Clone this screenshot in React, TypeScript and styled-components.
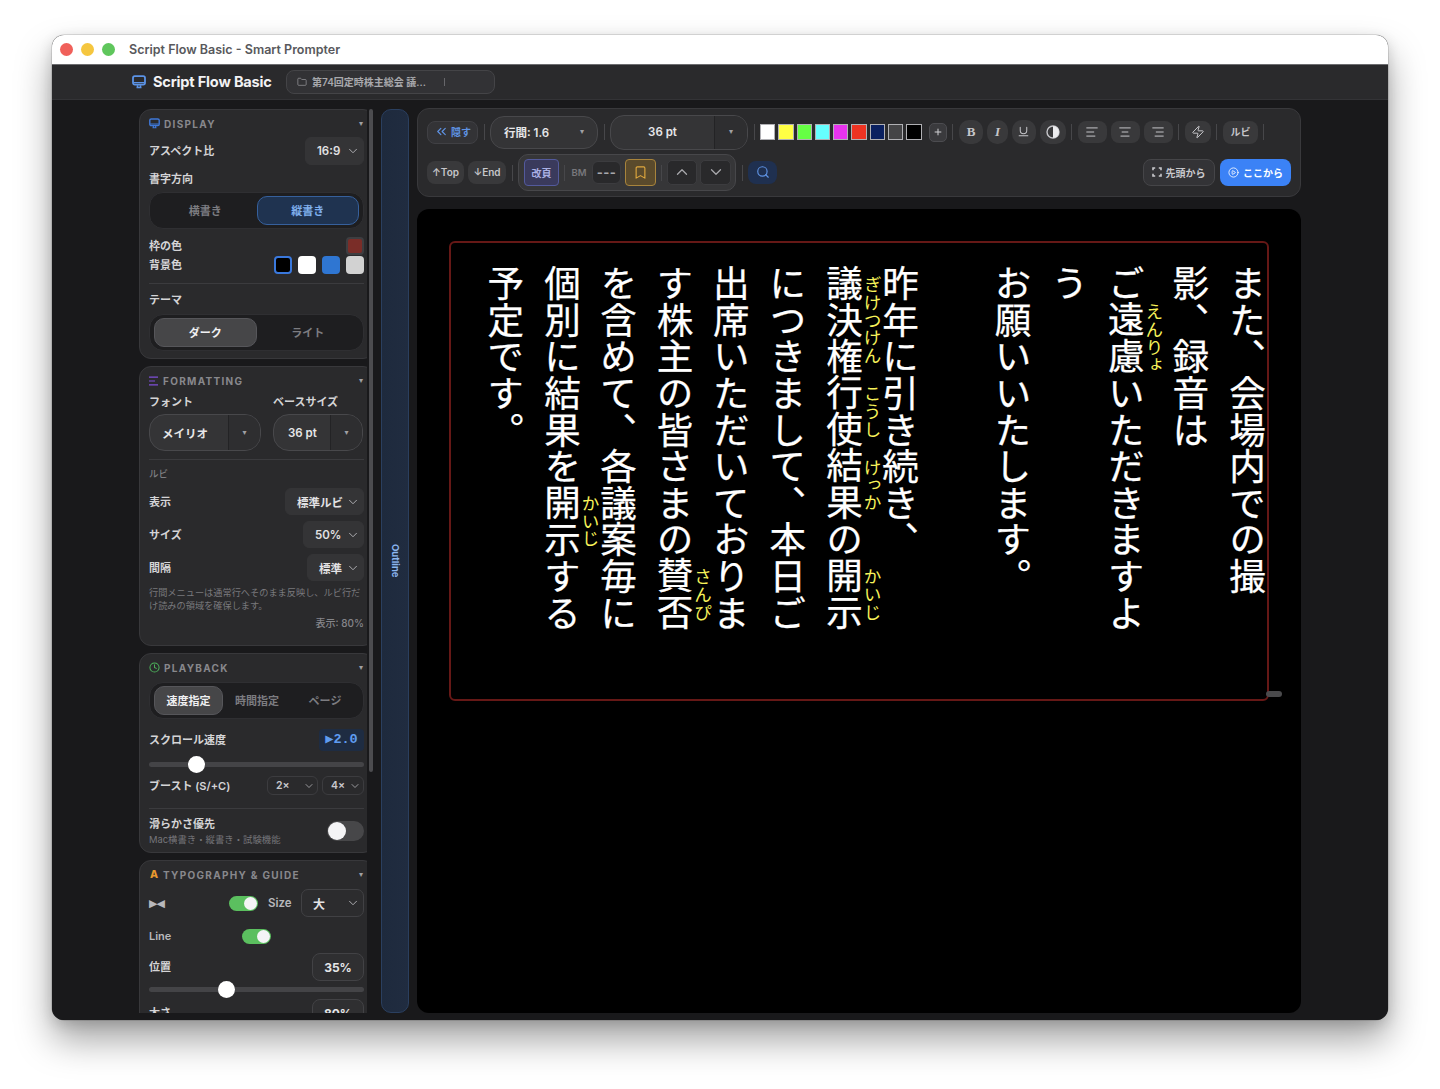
import React from "react";
import styled, { createGlobalStyle } from "styled-components";
import {
  AlignCenter, AlignLeft, AlignRight, Bookmark, ChevronDown, ChevronUp, ChevronsLeft, CirclePlay,
  Clock, Folder, Plus, Search, Underline, Zap,
} from "lucide-react";

const UI = `Inter, "Noto Sans CJK JP", sans-serif`;

const Global = createGlobalStyle`
  html, body { margin: 0; padding: 0; background: #fff; }
  body { width: 1440px; height: 1089px; overflow: hidden; font-family: ${UI}; }
  * { box-sizing: border-box; }
`;

const Page = styled.div`
  width: 1440px; height: 1089px; padding: 35px 52px 0;
`;
const Win = styled.div`
  height: 985px; border-radius: 12px; overflow: hidden; display: flex; flex-direction: column;
  box-shadow: 0 0 0 0.5px rgba(0,0,0,.22), 0 20px 36px rgba(0,0,0,.36), 0 4px 14px rgba(0,0,0,.14);
  background: #1a1a1c;
`;
const TitleBar = styled.div`
  height: 30px; flex: none; background: #fff; display: flex; align-items: center; padding-left: 8px;
  border-bottom: 1px solid #6d6d70;
`;
const Light = styled.span<{ $c: string }>`
  width: 13px; height: 13px; border-radius: 50%; background: ${p => p.$c}; margin-right: 8px; flex: none;
`;
const WinTitle = styled.div`
  margin-left: 6px; font-size: 12.5px; font-weight: 600; color: #58585c; white-space: nowrap;
`;
const AppHeader = styled.div`
  height: 35px; flex: none; background: #2a2a2c; border-bottom: 1px solid #333336;
  display: flex; align-items: center; padding: 0 0 1px 80px; color: #5b93e6;
`;
const Brand = styled.div`
  margin-left: 7px; font-size: 14.6px; font-weight: 700; letter-spacing: -0.2px; color: #f2f2f4; width: 134px; white-space: nowrap;
`;
const FileChip = styled.div`
  width: 209px; height: 24px; margin-left: -1px; border: 1px solid #444447; border-radius: 8px; background: #323235;
  display: flex; align-items: center; padding-left: 10px; gap: 5px; color: #a0a0a4;
`;
const FileName = styled.span`
  font-size: 10px; font-weight: 600; color: #a8a8ac; width: 127px; white-space: nowrap; overflow: hidden;
`;
const FileBar = styled.span`
  width: 1px; height: 8px; background: #66666a;
`;
const Body = styled.div`
  flex: 1; min-height: 0; display: flex; gap: 8px; padding: 8px 87px 7px; background: #19191b;
`;
const Sidebar = styled.div`
  width: 234px; flex: none; margin-top: 1px; display: flex; gap: 2px; min-height: 0;
`;
const CardsClip = styled.div`
  width: 228px; overflow: hidden; display: flex; flex-direction: column; gap: 7px; flex: none;
`;
const ScrollThumb = styled.div`
  width: 4px; height: 663px; border-radius: 3px; background: #4c4c4f; flex: none;
`;
const Card = styled.section<{ $pb: number }>`
  width: 236px; flex: none; background: #2a2a2c; border: 1px solid #38383b; border-radius: 12px;
  padding: 0 10px ${p => p.$pb}px 9px; display: flex; flex-direction: column; color: #dcdcde;
`;
const CardHead = styled.header<{ $c: string }>`
  height: 27px; flex: none; display: flex; align-items: center; gap: 4px; color: ${p => p.$c};
`;
const CardName = styled.span`
  font-size: 10px; font-weight: 700; letter-spacing: 1.3px; color: #88888c; white-space: nowrap; flex: 1;
`;
const TinyCaret = styled.span<{ $c?: string }>`
  font-family: "DejaVu Sans", sans-serif; font-size: 8px; line-height: 1; color: ${p => p.$c || "#a0a0a4"};
`;
const HeadCaret = styled(TinyCaret)`
  margin-right: 1px;
`;
const Row = styled.div<{ $mt?: number; $h?: number }>`
  margin-top: ${p => p.$mt || 0}px; ${p => p.$h ? `height: ${p.$h}px;` : ""}
  display: flex; align-items: center; justify-content: space-between; flex: none;
`;
const Label = styled.div<{ $mt?: number; $w?: number }>`
  margin-top: ${p => p.$mt || 0}px; font-size: 11px; font-weight: 600; color: #d4d4d6; line-height: 18px; white-space: nowrap;
  ${p => p.$w ? `width: ${p.$w}px; flex: none;` : ""}
`;
const Select = styled.div<{ $w: number; $h: number; $b?: boolean; $r?: number; $fs?: number }>`
  width: ${p => p.$w}px; height: ${p => p.$h}px; flex: none; border-radius: ${p => p.$r || 6}px;
  background: ${p => p.$b ? "#2c2c2e" : "#343436"}; border: 1px solid ${p => p.$b ? "#414144" : "#343436"};
  display: flex; align-items: center; justify-content: space-between; padding: 0 3px 0 11px;
  font-size: ${p => p.$fs || 11.5}px; font-weight: 600; color: #e2e2e4; white-space: nowrap;
  svg { color: #b4b4b8; flex: none; }
`;
const Seg = styled.div<{ $mt: number }>`
  margin-top: ${p => p.$mt}px; height: 37px; flex: none; border-radius: 14px; background: #1e1e20; border: 1px solid #2f2f32;
  padding: 3px 4px; display: flex; align-items: stretch; gap: 0;
`;
const SegBtn = styled.div<{ $tone?: "blue" | "gray"; $w?: number }>`
  ${p => p.$w ? `width: ${p.$w}px; flex: none;` : "flex: 1;"} border-radius: 10px; display: flex; align-items: center; justify-content: center;
  font-size: 11px; font-weight: 600; white-space: nowrap; padding-bottom: 2px;
  color: ${p => p.$tone === "blue" ? "#7fb0ee" : p.$tone === "gray" ? "#f0f0f2" : "#7c7c80"};
  background: ${p => p.$tone === "blue" ? "#1f3350" : p.$tone === "gray" ? "#464648" : "transparent"};
  border: 1px solid ${p => p.$tone === "blue" ? "#36609c" : p.$tone === "gray" ? "#56565a" : "transparent"};
`;
const ColorChips = styled.div`
  display: flex; gap: 6px;
`;
const ColorChip = styled.span<{ $c: string; $ring?: string }>`
  width: 18px; height: 18px; border-radius: 4px; background: ${p => p.$c};
  border: ${p => p.$ring ? `2px solid ${p.$ring}` : "none"};
`;
const FrameChip = styled.span`
  width: 18px; height: 18px; border-radius: 4px; background: #7a2d28; border: 2px solid #3e3e41;
`;
const Divider = styled.div<{ $mt: number }>`
  height: 1px; flex: none; margin-top: ${p => p.$mt}px; background: #3b3b3e;
`;
const DuoGrid = styled.div<{ $mt?: number }>`
  margin-top: ${p => p.$mt || 0}px; display: grid; grid-template-columns: 112px 90px; column-gap: 12px; flex: none;
`;
const Combo = styled.div<{ $h: number; $w?: number; $r?: number }>`
  height: ${p => p.$h}px; ${p => p.$w ? `width: ${p.$w}px; flex: none;` : ""} border-radius: ${p => p.$r || 15}px; border: 1px solid #48484b; background: #343436;
  display: flex; align-items: stretch; overflow: hidden;
`;
const ComboMain = styled.div<{ $pl?: number; $center?: boolean }>`
  flex: 1; display: flex; align-items: center; ${p => p.$center ? "justify-content: center;" : ""} padding-left: ${p => p.$pl || 0}px;
  font-size: 11.5px; font-weight: 600; color: #e6e6e8; white-space: nowrap;
`;
const ComboCaret = styled.div<{ $w: number; $line?: boolean }>`
  width: ${p => p.$w}px; flex: none; display: flex; align-items: center; justify-content: center;
  ${p => p.$line ? "border-left: 1px solid #232325; background: #2e2e30;" : ""}
`;
const MiniHead = styled.div<{ $mt: number }>`
  margin-top: ${p => p.$mt}px; font-size: 9.5px; font-weight: 500; color: #7e7e82; line-height: 14px;
`;
const Note = styled.p`
  margin: 5px 0 0; font-size: 9.2px; line-height: 13px; color: #79797d; font-weight: 400; word-break: break-all;
  width: 215px;
`;
const Percent = styled.div`
  margin-top: 4px; font-size: 10px; line-height: 14px; color: #85858a; text-align: right; font-weight: 500;
`;
const SpeedBox = styled.div`
  width: 45px; height: 22px; border-radius: 4px; background: #1e2c42; color: #5f9cf0;
  font: 700 13.5px/22px "Liberation Mono", monospace; text-align: center; white-space: nowrap;
`;
const Slider = styled.div<{ $mt: number; $pos: number }>`
  margin-top: ${p => p.$mt}px; height: 18px; flex: none; position: relative; display: flex; align-items: center;
  &::before { content: ""; flex: 1; height: 5px; border-radius: 3px; background: #444447; }
  &::after { content: ""; position: absolute; left: ${p => p.$pos}px; top: 0.5px; width: 17px; height: 17px; border-radius: 50%; background: #fff; }
`;
const Pair = styled.div<{ $gap: number }>`
  display: flex; align-items: center; gap: ${p => p.$gap}px;
`;
const BoostSelect = styled(Select)`
  padding: 0 2px 0 8px; font-size: 10.5px; color: #c8c8cc; background: #2a2a2c; border-color: #3c3c3f;
`;
const Stack = styled.div`
  display: flex; flex-direction: column;
`;
const SmoothTitle = styled.div`
  font-size: 11px; font-weight: 600; line-height: 16px; color: #d4d4d6; margin-top: 1px;
`;
const SmoothSub = styled.div`
  font-size: 9.4px; line-height: 14px; color: #75757a; margin-top: 1px; white-space: nowrap;
`;
const Toggle = styled.div<{ $on?: boolean; $w: number; $h: number; $ml?: number }>`
  position: relative; flex: none; width: ${p => p.$w}px; height: ${p => p.$h}px; border-radius: ${p => p.$h / 2}px;
  margin-left: ${p => p.$ml || 0}px; background: ${p => p.$on ? "#5bbf5f" : "#474749"};
  &::after {
    content: ""; position: absolute; top: 1px; width: ${p => p.$h - 2}px; height: ${p => p.$h - 2}px; border-radius: 50%; background: #f4f4f6;
    ${p => p.$on ? "right: 1px;" : "left: 1px;"}
  }
`;
const PlainRow = styled.div<{ $mt: number; $h: number }>`
  margin-top: ${p => p.$mt}px; height: ${p => p.$h}px; flex: none; display: flex; align-items: center;
`;
const GlyphLabel = styled.span`
  width: 80px; flex: none; font-family: "DejaVu Sans", sans-serif; font-size: 11px; color: #b8b8bc; letter-spacing: -1px;
`;
const SizeLabel = styled.span`
  margin-left: 10px; font-size: 11.5px; font-weight: 600; color: #b8b8bc; flex: 1;
`;
const LineLabel = styled.span`
  width: 93px; flex: none; font-size: 11px; font-weight: 600; color: #b8b8bc;
`;
const ValueBox = styled.div`
  width: 52px; height: 28px; flex: none; border: 1px solid #424245; border-radius: 8px; background: #2f2f31;
  display: flex; align-items: center; justify-content: center; font-size: 12px; font-weight: 700; color: #e6e6e8;
`;
const Rail = styled.aside`
  width: 28px; flex: none; margin-top: 1px; border-radius: 10px; border: 1px solid #2a3f5f;
  background: linear-gradient(90deg, #1e2a3d, #202c40); display: flex; align-items: center; justify-content: center;
`;
const RailText = styled.span`
  writing-mode: vertical-rl; font-size: 9.5px; font-weight: 700; color: #8cb6f0;
`;
const Main = styled.main`
  flex: 1; min-width: 0; display: flex; flex-direction: column; gap: 12px;
`;
const Toolbar = styled.div`
  height: 89px; flex: none; border-radius: 12px; border: 1px solid #39393c; background: #2a2a2c;
  padding: 5px 9px; display: flex; flex-direction: column; gap: 4px;
`;
const ToolRow = styled.div<{ $h: number }>`
  height: ${p => p.$h}px; flex: none; display: flex; align-items: center; gap: 5.5px;
`;
const Sep = styled.span<{ $m?: number }>`
  width: 1px; height: 16px; flex: none; background: #47474a; margin: 0 ${p => p.$m || 0}px;
`;
const Btn = styled.div<{ $w: number; $h: number; $r?: number; $tone?: "plain" | "ghost" | "blue" | "dark" }>`
  width: ${p => p.$w}px; height: ${p => p.$h}px; flex: none; border-radius: ${p => p.$r || 8}px;
  display: flex; align-items: center; justify-content: center; gap: 2px; white-space: nowrap;
  font-size: 10px; font-weight: 600; padding-bottom: 1px;
  ${p => p.$tone === "ghost" ? "background:#333336;border:1px solid #404044;color:#5f93e4;"
    : p.$tone === "blue" ? "background:#1f3050;color:#5f93e4;"
    : p.$tone === "dark" ? "background:#29292b;border:1px solid #3c3c3f;color:#a8a8ac;"
    : "background:#39393b;color:#c6c6ca;"}
`;
const Swatches = styled.div`
  display: flex; gap: 3px; margin-right: 1.8px;
`;
const Swatch = styled.span<{ $c: string }>`
  width: 15.3px; height: 15.3px; flex: none; background: ${p => p.$c}; border: 1px solid #b0b0b4;
`;
const PlusBtn = styled(Btn)`
  background: #3a3a3d; border: 1px solid #4c4c50; color: #d0d0d4;
`;
const BtnGroup = styled.div<{ $gap: number }>`
  display: flex; gap: ${p => p.$gap}px; align-items: center;
`;
const SerifB = styled.span<{ $i?: boolean }>`
  font-family: "Liberation Serif", serif; font-size: 13px; font-weight: 700; font-style: ${p => p.$i ? "italic" : "normal"};
`;
const PageGroup = styled.div`
  width: 218px; height: 37px; flex: none; border: 1px solid #47474a; border-radius: 10px; background: #363638;
  padding: 0 4px 0 5px; display: flex; align-items: center; gap: 4px;
`;
const PageBreak = styled.div`
  width: 35px; height: 27px; flex: none; border-radius: 4px; background: #3a3a5c; border: 1px solid #535a9c; color: #aab0e4;
  font-size: 10px; font-weight: 600; display: flex; align-items: center; justify-content: center; padding-bottom: 1px;
`;
const BmLabel = styled.span`
  width: 18px; flex: none; font-size: 9.5px; font-weight: 600; color: #78787c; text-align: center; margin-left: 0;
`;
const BmDash = styled.span`
  font-size: 13px; font-weight: 700; letter-spacing: 0.4px; color: #a8a8ac;
`;
const BmOn = styled.div`
  width: 31px; height: 27px; flex: none; border-radius: 4px; background: #5a4a2c; border: 1px solid #a8843c; color: #e0a83e;
  display: flex; align-items: center; justify-content: center;
`;
const Spacer = styled.div`
  flex: 1;
`;
const OutlineCta = styled.div`
  width: 72px; height: 27px; flex: none; border-radius: 8px; background: #333336; border: 1px solid #454548; color: #c8c8cc;
  font-size: 10px; font-weight: 600; display: flex; align-items: center; justify-content: center; gap: 4px; white-space: nowrap; padding-bottom: 1px;
`;
const PrimaryCta = styled(OutlineCta)`
  width: 71px; background: #3b82f6; border: none; color: #fff;
`;
const Stage = styled.div`
  flex: 1; min-height: 0; background: #000; border-radius: 12px; padding: 32px 32px 0;
`;
const Frame = styled.div`
  position: relative; height: 460px; border: 2px solid #661816; border-radius: 6px; padding: 21.5px 2px 0 0;
  display: flex; justify-content: flex-end;
`;
const Handle = styled.span`
  position: absolute; right: -15px; bottom: 2.5px; width: 16px; height: 6px; border-radius: 3px; background: #4a4a4c;
`;
const Columns = styled.div`
  writing-mode: vertical-rl; font-family: "Noto Sans CJK JP", sans-serif; color: #fff; font-size: 36.6px; font-weight: 400;
  height: 420px;
`;
const Line = styled.div<{ $ruby?: boolean; $mr?: number }>`
  display: block; line-height: 36.6px; white-space: nowrap;
  padding-right: ${p => p.$ruby ? 2.4 : 20}px;
  margin-right: ${p => p.$mr || 0}px;
  -webkit-text-stroke: 0.25px #fff;
  &:first-child { padding-right: 0; }
`;
const BlankLine = styled.div`
  width: 56px;
`;
const Ruby = styled.ruby`
  ruby-align: center;
`;
const Rt = styled.rt`
  font-size: 17.6px; font-weight: 400; line-height: 17.6px; color: #f7f25a; letter-spacing: 0; -webkit-text-stroke: 0;
`;

const DisplayIcon = ({ size = 13 }: { size?: number }) => (
  <svg width={size} height={size} viewBox="0 0 14 14" fill="none" stroke="currentColor">
    <rect x="1" y="1.2" width="12" height="8.4" rx="1.8" strokeWidth="1.8" />
    <path d="M1.5 7.6h11" strokeWidth="1.2" />
    <path d="M4.5 12.4h5M5.5 10.2v2M8.5 10.2v2" strokeWidth="1.5" />
  </svg>
);

const FormatIcon = () => (
  <svg width="10" height="10" viewBox="0 0 10 10" fill="none" stroke="currentColor" strokeWidth="1.2">
    <path d="M0 1.2h9M0 5h6M0 8.8h9" />
  </svg>
);

const HalfCircle = () => (
  <svg width="14" height="14" viewBox="0 0 14 14">
    <circle cx="7" cy="7" r="6" fill="none" stroke="currentColor" strokeWidth="1.4" />
    <path d="M7 1a6 6 0 0 1 0 12z" fill="#ececee" />
  </svg>
);

const CornerIcon = () => (
  <svg width="10" height="10" viewBox="0 0 10 10" fill="none" stroke="currentColor" strokeWidth="1.6">
    <path d="M1 3.2V1h2.2M6.8 1H9v2.2M9 6.8V9H6.8M3.2 9H1V6.8" />
  </svg>
);

const AccentA = styled.span`
  width: 10px; font-size: 10.5px; font-weight: 800; color: #e8992f; text-align: center;
`;

const Chev = () => <ChevronDown size={14} strokeWidth={1.6} />;

export default function App() {
  return (
    <Page>
      <Global />
      <Win>
        <TitleBar>
          <Light $c="#f0605a" />
          <Light $c="#f5c63f" />
          <Light $c="#5fc65c" />
          <WinTitle>Script Flow Basic - Smart Prompter</WinTitle>
        </TitleBar>
        <AppHeader>
          <DisplayIcon size={14} />
          <Brand>Script Flow Basic</Brand>
          <FileChip>
            <Folder size={10} strokeWidth={1.6} />
            <FileName>第74回定時株主総会 議...</FileName>
            <FileBar />
          </FileChip>
        </AppHeader>
        <Body>
          <Sidebar>
            <CardsClip>
              <Card $pb={7}>
                <CardHead $c="#3f78d8">
                  <DisplayIcon size={11} />
                  <CardName>DISPLAY</CardName>
                  <HeadCaret>▾</HeadCaret>
                </CardHead>
                <Row $h={28}>
                  <Label>アスペクト比</Label>
                  <Select $w={59} $h={28}>16:9<Chev /></Select>
                </Row>
                <Label $mt={5}>書字方向</Label>
                <Seg $mt={4}>
                  <SegBtn>横書き</SegBtn>
                  <SegBtn $tone="blue">縦書き</SegBtn>
                </Seg>
                <Row $mt={8} $h={18}>
                  <Label>枠の色</Label>
                  <FrameChip />
                </Row>
                <Row $mt={1} $h={18}>
                  <Label>背景色</Label>
                  <ColorChips>
                    <ColorChip $c="#000" $ring="#3a78dc" />
                    <ColorChip $c="#fff" />
                    <ColorChip $c="#2f76d2" />
                    <ColorChip $c="#d2d2d2" />
                  </ColorChips>
                </Row>
                <Divider $mt={9} />
                <Label $mt={7}>テーマ</Label>
                <Seg $mt={5}>
                  <SegBtn $tone="gray">ダーク</SegBtn>
                  <SegBtn>ライト</SegBtn>
                </Seg>
              </Card>

              <Card $pb={15}>
                <CardHead $c="#7f4fd8">
                  <FormatIcon />
                  <CardName>FORMATTING</CardName>
                  <HeadCaret>▾</HeadCaret>
                </CardHead>
                <DuoGrid>
                  <Label $mt={-1}>フォント</Label>
                  <Label $mt={-1}>ベースサイズ</Label>
                </DuoGrid>
                <DuoGrid $mt={3}>
                  <Combo $h={37} $r={16}>
                    <ComboMain $pl={12}>メイリオ</ComboMain>
                    <ComboCaret $w={32} $line><TinyCaret>▾</TinyCaret></ComboCaret>
                  </Combo>
                  <Combo $h={37} $r={16}>
                    <ComboMain $pl={14}>36 pt</ComboMain>
                    <ComboCaret $w={32} $line><TinyCaret>▾</TinyCaret></ComboCaret>
                  </Combo>
                </DuoGrid>
                <Divider $mt={8} />
                <MiniHead $mt={7}>ルビ</MiniHead>
                <Row $mt={7}>
                  <Label>表示</Label>
                  <Select $w={79} $h={27}>標準ルビ<Chev /></Select>
                </Row>
                <Row $mt={6}>
                  <Label>サイズ</Label>
                  <Select $w={61} $h={27}>50%<Chev /></Select>
                </Row>
                <Row $mt={6}>
                  <Label>間隔</Label>
                  <Select $w={57} $h={27}>標準<Chev /></Select>
                </Row>
                <Note>行間メニューは通常行へそのまま反映し、ルビ行だけ読みの領域を確保します。</Note>
                <Percent>表示: 80%</Percent>
              </Card>

              <Card $pb={4}>
                <CardHead $c="#4caf5a">
                  <Clock size={11} strokeWidth={2.2} />
                  <CardName>PLAYBACK</CardName>
                  <HeadCaret>▾</HeadCaret>
                </CardHead>
                <Seg $mt={1}>
                  <SegBtn $tone="gray" $w={69}>速度指定</SegBtn>
                  <SegBtn>時間指定</SegBtn>
                  <SegBtn>ページ</SegBtn>
                </Seg>
                <Row $mt={10}>
                  <Label>スクロール速度</Label>
                  <SpeedBox>▶2.0</SpeedBox>
                </Row>
                <Slider $mt={4} $pos={39} />
                <Row $mt={3}>
                  <Label>ブースト (S/+C)</Label>
                  <Pair $gap={4}>
                    <BoostSelect $w={51} $h={19} $b>2×<ChevronDown size={12} strokeWidth={1.6} /></BoostSelect>
                    <BoostSelect $w={42} $h={19} $b>4×<ChevronDown size={12} strokeWidth={1.6} /></BoostSelect>
                  </Pair>
                </Row>
                <Divider $mt={13} />
                <Row $mt={5} $h={34}>
                  <Stack>
                    <SmoothTitle>滑らかさ優先</SmoothTitle>
                    <SmoothSub>Mac横書き・縦書き・試験機能</SmoothSub>
                  </Stack>
                  <Toggle $w={37} $h={20} />
                </Row>
              </Card>

              <Card $pb={10}>
                <CardHead $c="#e8992f">
                  <AccentA>A</AccentA>
                  <CardName>TYPOGRAPHY &amp; GUIDE</CardName>
                  <HeadCaret>▾</HeadCaret>
                </CardHead>
                <PlainRow $mt={1} $h={28}>
                  <GlyphLabel>▶◀</GlyphLabel>
                  <Toggle $on $w={29} $h={15} />
                  <SizeLabel>Size</SizeLabel>
                  <Select $w={63} $h={28} $b $r={7} $fs={12}>大<Chev /></Select>
                </PlainRow>
                <PlainRow $mt={5} $h={28}>
                  <LineLabel>Line</LineLabel>
                  <Toggle $on $w={29} $h={15} />
                </PlainRow>
                <Row $mt={3} $h={28}>
                  <Label>位置</Label>
                  <ValueBox>35%</ValueBox>
                </Row>
                <Slider $mt={-1} $pos={69} />
                <Row $mt={1} $h={28}>
                  <Label>太さ</Label>
                  <ValueBox>80%</ValueBox>
                </Row>
              </Card>
            </CardsClip>
            <ScrollThumb />
          </Sidebar>

          <Rail><RailText>Outline</RailText></Rail>

          <Main>
            <Toolbar>
              <ToolRow $h={36}>
                <Btn $w={51} $h={23} $tone="ghost"><ChevronsLeft size={15} strokeWidth={1.9} />隠す</Btn>
                <Sep />
                <Combo $h={33} $w={108} $r={14}>
                  <ComboMain $pl={13}>行間: 1.6</ComboMain>
                  <ComboCaret $w={30}><TinyCaret>▾</TinyCaret></ComboCaret>
                </Combo>
                <Sep />
                <Combo $h={35} $w={138} $r={14}>
                  <ComboMain $center>36 pt</ComboMain>
                  <ComboCaret $w={33} $line><TinyCaret>▾</TinyCaret></ComboCaret>
                </Combo>
                <Sep />
                <Swatches>
                  {["#fff", "#ffff44", "#66ff44", "#66ffff", "#e833ee", "#ee3322", "#0a2060", "#444446", "#000"].map(c => (
                    <Swatch key={c} $c={c} />
                  ))}
                </Swatches>
                <PlusBtn $w={18} $h={19} $r={5}><Plus size={10} strokeWidth={2.4} /></PlusBtn>
                <Sep />
                <BtnGroup $gap={4}>
                  <Btn $w={24} $h={24} $r={10}><SerifB>B</SerifB></Btn>
                  <Btn $w={21} $h={24} $r={10}><SerifB $i>I</SerifB></Btn>
                  <Btn $w={24} $h={24} $r={10}><Underline size={13} strokeWidth={1.9} /></Btn>
                  <Btn $w={26} $h={24} $r={10}><HalfCircle /></Btn>
                </BtnGroup>
                <Sep />
                <BtnGroup $gap={4}>
                  <Btn $w={29} $h={22}><AlignLeft size={14} strokeWidth={1.7} /></Btn>
                  <Btn $w={29} $h={22}><AlignCenter size={14} strokeWidth={1.7} /></Btn>
                  <Btn $w={29} $h={22}><AlignRight size={14} strokeWidth={1.7} /></Btn>
                </BtnGroup>
                <Sep />
                <Btn $w={26} $h={22}><Zap size={14} strokeWidth={1.7} /></Btn>
                <Sep />
                <Btn $w={35} $h={23}>ルビ</Btn>
                <Sep />
              </ToolRow>
              <ToolRow $h={37}>
                <BtnGroup $gap={4}>
                  <Btn $w={37} $h={23}>↑Top</Btn>
                  <Btn $w={38} $h={23}>↓End</Btn>
                </BtnGroup>
                <Sep />
                <PageGroup>
                  <PageBreak>改頁</PageBreak>
                  <Sep $m={1} />
                  <BmLabel>BM</BmLabel>
                  <Btn $w={29} $h={23} $r={6} $tone="dark"><BmDash>---</BmDash></Btn>
                  <BmOn><Bookmark size={15} strokeWidth={1.8} /></BmOn>
                  <Sep $m={1} />
                  <BtnGroup $gap={3}>
                    <Btn $w={30} $h={25} $r={5} $tone="dark"><ChevronUp size={18} strokeWidth={1.7} /></Btn>
                    <Btn $w={31} $h={25} $r={5} $tone="dark"><ChevronDown size={18} strokeWidth={1.7} /></Btn>
                  </BtnGroup>
                </PageGroup>
                <Sep />
                <Btn $w={29} $h={23} $tone="blue"><Search size={14} strokeWidth={2} /></Btn>
                <Spacer />
                <OutlineCta><CornerIcon />先頭から</OutlineCta>
                <PrimaryCta><CirclePlay size={11} strokeWidth={1.8} />ここから</PrimaryCta>
              </ToolRow>
            </Toolbar>
            <Stage>
              <Frame>
                <Columns>
                  <Line>また、会場内での撮</Line>
                  <Line>影、録音は</Line>
                  <Line $ruby $mr={8.5}>ご<Ruby>遠慮<Rt>えんりょ</Rt></Ruby>いただきますよ</Line>
                  <Line>う</Line>
                  <Line>お願いいたします。</Line>
                  <BlankLine />
                  <Line>昨年に引き続き、</Line>
                  <Line $ruby><Ruby>議決権<Rt>ぎけつけん</Rt></Ruby><Ruby>行使<Rt>こうし</Rt></Ruby><Ruby>結果<Rt>けっか</Rt></Ruby>の<Ruby>開示<Rt>かいじ</Rt></Ruby></Line>
                  <Line>につきまして、本日ご</Line>
                  <Line>出席いただいておりま</Line>
                  <Line $ruby>す株主の皆さまの<Ruby>賛否<Rt>さんぴ</Rt></Ruby></Line>
                  <Line>を含めて、各議案毎に</Line>
                  <Line $ruby>個別に結果を<Ruby>開示<Rt>かいじ</Rt></Ruby>する</Line>
                  <Line>予定です。</Line>
                </Columns>
                <Handle />
              </Frame>
            </Stage>
          </Main>
        </Body>
      </Win>
    </Page>
  );
}
